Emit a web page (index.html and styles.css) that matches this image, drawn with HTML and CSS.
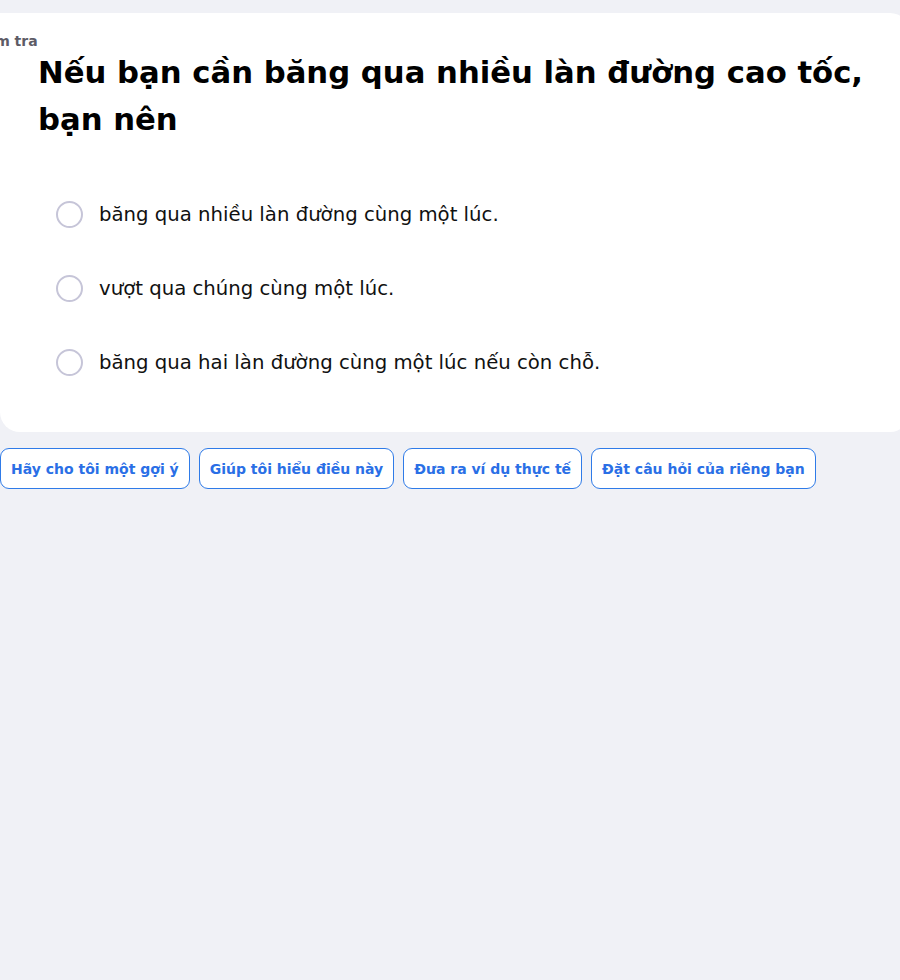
FILE: index.html
```html
<!DOCTYPE html>
<html lang="vi">
<head>
<meta charset="utf-8">
<title>Kiểm tra</title>
<link rel="stylesheet" href="styles.css">
</head>
<body>
<div class="page">
  <section class="card">
    <div class="label">Kiểm tra</div>
    <h1 class="title">Nếu bạn cần băng qua nhiều làn đường cao tốc, bạn nên</h1>
    <ul class="options">
      <li class="option"><span class="radio"></span><span class="option-text">băng qua nhiều làn đường cùng một lúc.</span></li>
      <li class="option"><span class="radio"></span><span class="option-text">vượt qua chúng cùng một lúc.</span></li>
      <li class="option"><span class="radio"></span><span class="option-text">băng qua hai làn đường cùng một lúc nếu còn chỗ.</span></li>
    </ul>
  </section>
  <div class="chips">
    <button class="chip">Hãy cho tôi một gợi ý</button>
    <button class="chip">Giúp tôi hiểu điều này</button>
    <button class="chip">Đưa ra ví dụ thực tế</button>
    <button class="chip">Đặt câu hỏi của riêng bạn</button>
  </div>
</div>
</body>
</html>
```

FILE: styles.css
```css
html, body {
  margin: 0;
  padding: 0;
}
body {
  background: #f0f1f6;
  font-family: "DejaVu Sans", "Open Sans", sans-serif;
  overflow: hidden;
  width: 900px;
  height: 980px;
}
.page {
  padding-top: 13px;
}
.card {
  background: #ffffff;
  width: 910px;
  box-sizing: border-box;
  border-radius: 0 20px 20px 20px;
  padding: 18px 0 56px 0;
}
.label {
  margin-left: -30px;
  font-size: 14px;
  line-height: 20px;
  font-weight: 700;
  color: #5d5b66;
}
.title {
  margin: -2px 0 0 38px;
  font-size: 30.7px;
  line-height: 47px;
  font-weight: 700;
  color: #000;
  width: 840px;
}
.options {
  list-style: none;
  margin: 57px 0 0 56px;
  padding: 0;
  display: flex;
  flex-direction: column;
  gap: 46px;
}
.option {
  display: flex;
  align-items: center;
  gap: 16px;
  height: 28px;
}
.radio {
  width: 23px;
  height: 23px;
  border: 2px solid #c6c5d8;
  border-radius: 50%;
  flex: none;
}
.option-text {
  font-size: 19.7px;
  color: #111;
}
.chips {
  display: flex;
  gap: 9px;
  margin-top: 16px;
}
.chip {
  height: 41px;
  padding: 0 10px;
  background: #fff;
  border: 1px solid #2f7be8;
  border-radius: 9px;
  color: #2a6fe6;
  font-family: "DejaVu Sans", "Open Sans", sans-serif;
  font-size: 14px;
  font-weight: 700;
  cursor: pointer;
}
```
